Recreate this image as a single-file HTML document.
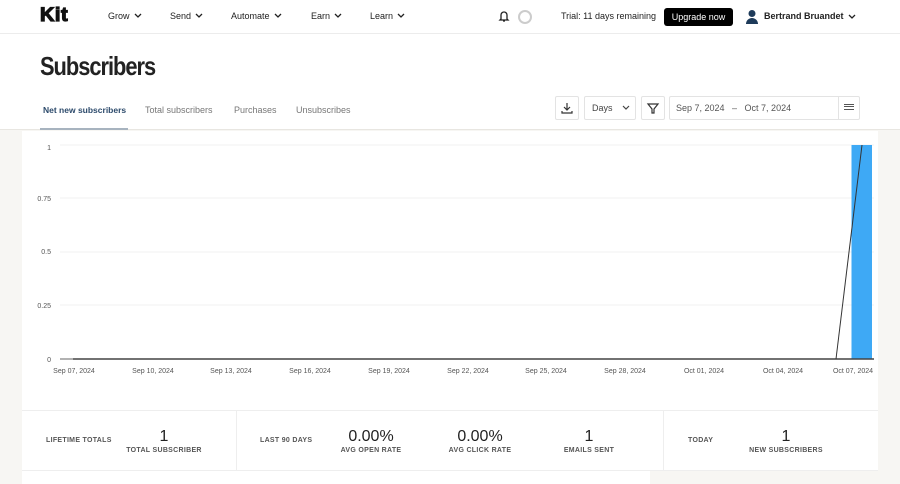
<!DOCTYPE html>
<html><head><style>
*{margin:0;padding:0;box-sizing:border-box}
body{width:900px;height:484px;overflow:hidden;background:#f7f6f3;font-family:"Liberation Sans",sans-serif;color:#222;position:relative}
.a{position:absolute;white-space:nowrap}
.nav{font-size:9px;color:#222}
.nav svg{margin-left:4px;vertical-align:1px}
.lab{font-size:7px;color:#555;font-weight:bold;letter-spacing:.3px}
.big{font-size:16px;color:#222;text-align:center}
</style></head><body>
<div class="a" style="left:0;top:0;width:900px;height:130px;background:#fff;border-bottom:1px solid #e8e6e1"></div>
<div class="a" style="left:0;top:33px;width:900px;height:1px;background:#ececec"></div>
<div class="a" style="left:40px;top:5px;font-size:19px;font-weight:bold;-webkit-text-stroke:1.2px #111;color:#111;letter-spacing:0.5px;transform:scaleX(1.05);transform-origin:left">Kit</div>
<div class="a nav" style="left:108px;top:11px">Grow<svg width="8" height="5"><path d="M1 1l3 3 3-3" fill="none" stroke="#222" stroke-width="1.3"/></svg></div>
<div class="a nav" style="left:170px;top:11px">Send<svg width="8" height="5"><path d="M1 1l3 3 3-3" fill="none" stroke="#222" stroke-width="1.3"/></svg></div>
<div class="a nav" style="left:231px;top:11px">Automate<svg width="8" height="5"><path d="M1 1l3 3 3-3" fill="none" stroke="#222" stroke-width="1.3"/></svg></div>
<div class="a nav" style="left:311px;top:11px">Earn<svg width="8" height="5"><path d="M1 1l3 3 3-3" fill="none" stroke="#222" stroke-width="1.3"/></svg></div>
<div class="a nav" style="left:370px;top:11px">Learn<svg width="8" height="5"><path d="M1 1l3 3 3-3" fill="none" stroke="#222" stroke-width="1.3"/></svg></div>
<svg class="a" style="left:498px;top:10px" width="12" height="13" viewBox="0 0 12 13"><path d="M3 9V5a3 3 0 0 1 6 0v4l1 1H2zM5 11h2" fill="none" stroke="#222" stroke-width="1.3"/></svg>
<div class="a" style="left:518px;top:10px;width:14px;height:14px;border-radius:50%;border:2px solid #ccc"></div>
<div class="a nav" style="left:561px;top:11px">Trial: 11 days remaining</div>
<div class="a" style="left:664px;top:8px;width:69px;height:18px;background:#000;border-radius:3px;color:#fff;font-size:9px;text-align:center;line-height:18px">Upgrade now</div>
<svg class="a" style="left:745px;top:9px" width="14" height="15"><circle cx="7" cy="4.5" r="3.5" fill="#1e3b5a"/><path d="M1 15a6 6 0 0 1 12 0z" fill="#1e3b5a"/></svg>
<div class="a nav" style="left:764px;top:11px;font-weight:bold">Bertrand Bruandet</div>
<svg class="a" style="left:848px;top:14px" width="8" height="5"><path d="M1 1l3 3 3-3" fill="none" stroke="#222" stroke-width="1.3"/></svg>
<div class="a" style="left:40px;top:51px;font-size:26px;font-weight:bold;letter-spacing:-1.2px;transform:scaleX(.84);transform-origin:left">Subscribers</div>
<div class="a" style="left:43px;top:105px;font-size:8.5px;color:#2c4a6b;font-weight:bold">Net new subscribers</div>
<div class="a" style="left:40px;top:128px;width:88px;height:2px;background:#a7b3bf"></div>
<div class="a" style="left:145px;top:105px;font-size:9px;color:#777">Total subscribers</div>
<div class="a" style="left:234px;top:105px;font-size:9px;color:#777">Purchases</div>
<div class="a" style="left:296px;top:105px;font-size:9px;color:#777">Unsubscribes</div>
<div class="a" style="left:555px;top:96px;width:24px;height:24px;border:1px solid #e3e3e3;border-radius:2px"><svg width="22" height="22"><path d="M11 6v7M8 10l3 3 3-3M6 14v2h10v-2" fill="none" stroke="#333" stroke-width="1.2"/></svg></div>
<div class="a" style="left:584px;top:96px;width:52px;height:24px;border:1px solid #e3e3e3;border-radius:2px;font-size:9px;line-height:22px;padding-left:7px;color:#444">Days<svg style="margin-left:9px;vertical-align:1px" width="8" height="5"><path d="M1 1l3 3 3-3" fill="none" stroke="#444" stroke-width="1.2"/></svg></div>
<div class="a" style="left:641px;top:96px;width:24px;height:24px;border:1px solid #e3e3e3;border-radius:2px"><svg width="22" height="22"><path d="M6 7h10l-4 5v4h-2v-4z" fill="none" stroke="#333" stroke-width="1.2"/></svg></div>
<div class="a" style="left:669px;top:96px;width:191px;height:24px;border:1px solid #e3e3e3;border-radius:2px;font-size:9px;line-height:22px;padding-left:6px;color:#555">Sep 7, 2024 &nbsp; – &nbsp; Oct 7, 2024</div>
<div class="a" style="left:838px;top:96px;width:1px;height:24px;background:#e3e3e3"></div>
<div class="a" style="left:844px;top:104px;width:10px;height:6px;border-top:1px solid #555;border-bottom:1px solid #555"></div>
<div class="a" style="left:844px;top:106px;width:10px;height:1px;background:#555"></div>
<div class="a" style="left:22px;top:131px;width:856px;height:353px;background:#fff"></div>
<div class="a" style="left:650px;top:471px;width:228px;height:13px;background:#f7f6f3"></div>
<svg class="a" style="left:0;top:130px" width="900" height="250">
<g stroke="#f0f0f0" stroke-width="1"><line x1="60" x2="874" y1="15" y2="15"/><line x1="60" x2="874" y1="68" y2="68"/><line x1="60" x2="874" y1="122" y2="122"/><line x1="60" x2="874" y1="175" y2="175"/></g>
<rect x="851.5" y="15" width="20.5" height="214" fill="#3ea9f5"/>
<line x1="60" x2="73" y1="229" y2="229" stroke="#999" stroke-width="1.5"/>
<line x1="73" x2="874" y1="229" y2="229" stroke="#444" stroke-width="1.5"/>
<line x1="836" y1="229" x2="862" y2="15" stroke="#333" stroke-width="1"/>
<g font-family="Liberation Sans" font-size="7" fill="#555" text-anchor="end"><text x="51" y="20">1</text><text x="51" y="71">0.75</text><text x="51" y="124">0.5</text><text x="51" y="178">0.25</text><text x="51" y="232">0</text></g>
<g font-family="Liberation Sans" font-size="7" fill="#555" text-anchor="middle"><text x="74" y="243">Sep 07, 2024</text><text x="153" y="243">Sep 10, 2024</text><text x="231" y="243">Sep 13, 2024</text><text x="310" y="243">Sep 16, 2024</text><text x="389" y="243">Sep 19, 2024</text><text x="468" y="243">Sep 22, 2024</text><text x="546" y="243">Sep 25, 2024</text><text x="625" y="243">Sep 28, 2024</text><text x="704" y="243">Oct 01, 2024</text><text x="783" y="243">Oct 04, 2024</text><text x="853" y="243">Oct 07, 2024</text></g>
</svg>
<div class="a" style="left:22px;top:410px;width:856px;height:1px;background:#eee"></div>
<div class="a" style="left:22px;top:470px;width:856px;height:1px;background:#eee"></div>
<div class="a" style="left:236px;top:410px;width:1px;height:61px;background:#eee"></div>
<div class="a" style="left:663px;top:410px;width:1px;height:61px;background:#eee"></div>
<div class="a lab" style="left:46px;top:437px">LIFETIME TOTALS</div>
<div class="a big" style="left:124px;top:428px;width:80px">1</div>
<div class="a lab" style="left:119px;top:447px;width:90px;text-align:center">TOTAL SUBSCRIBER</div>
<div class="a lab" style="left:260px;top:437px">LAST 90 DAYS</div>
<div class="a big" style="left:331px;top:428px;width:80px">0.00%</div>
<div class="a lab" style="left:326px;top:447px;width:90px;text-align:center">AVG OPEN RATE</div>
<div class="a big" style="left:440px;top:428px;width:80px">0.00%</div>
<div class="a lab" style="left:435px;top:447px;width:90px;text-align:center">AVG CLICK RATE</div>
<div class="a big" style="left:549px;top:428px;width:80px">1</div>
<div class="a lab" style="left:544px;top:447px;width:90px;text-align:center">EMAILS SENT</div>
<div class="a lab" style="left:688px;top:437px">TODAY</div>
<div class="a big" style="left:746px;top:428px;width:80px">1</div>
<div class="a lab" style="left:736px;top:447px;width:100px;text-align:center">NEW SUBSCRIBERS</div>
</body></html>
